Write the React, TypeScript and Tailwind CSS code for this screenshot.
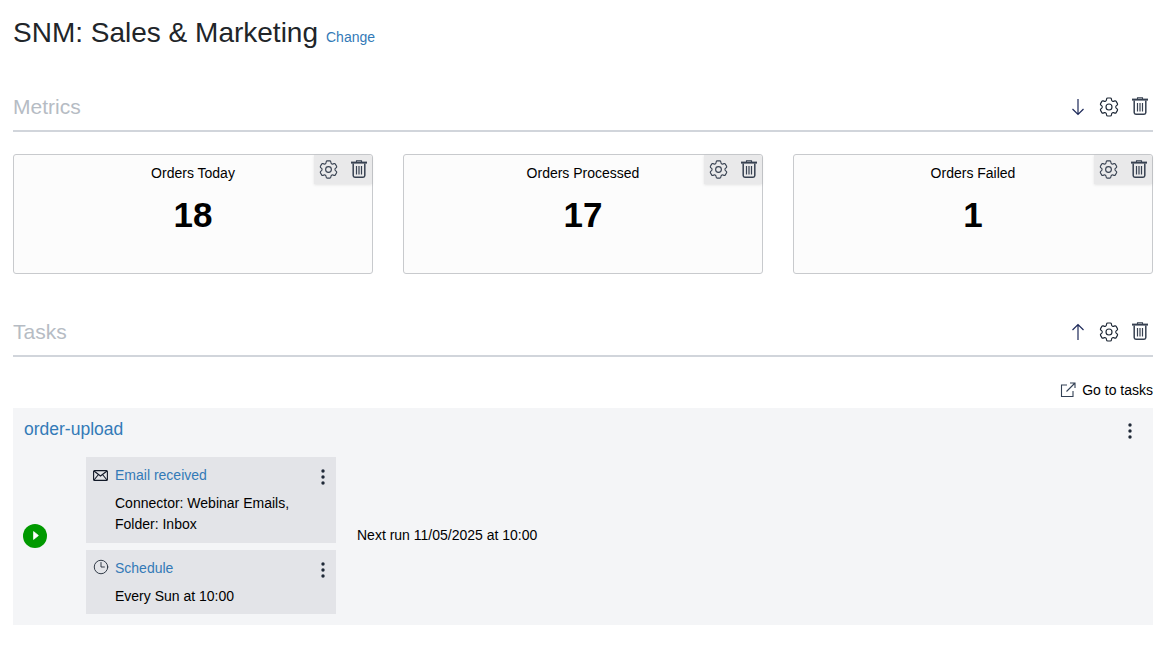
import React from "react";
import { HiOutlineCog6Tooth, HiOutlineClock } from "react-icons/hi2";

const link = "text-[#337ab7]";

function TrashIcon({ className }: { className?: string }) {
  return (
    <svg viewBox="0 0 16 18" fill="none" stroke="currentColor" className={className}>
      <path d="M5.5 2V.7h5V2" strokeWidth="1.1" />
      <path d="M0 2.6h16" strokeWidth="2" />
      <path d="M2.2 3.5v12c0 1 .7 1.7 1.7 1.7h8.2c1 0 1.7-.7 1.7-1.7v-12" strokeWidth="1.5" />
      <path d="M5.5 6v8.5M8 6v8.5M10.5 6v8.5" strokeWidth="1.2" />
    </svg>
  );
}

function ArrowIcon({ up }: { up?: boolean }) {
  return (
    <svg viewBox="0 0 14 18" fill="none" stroke="#1e2a5a" strokeWidth="1.2" className="w-[14px] h-[18px]">
      {up ? <path d="M7 17V1.5M1.5 7L7 1.5 12.5 7" /> : <path d="M7 1v15.5M1.5 11L7 16.5 12.5 11" />}
    </svg>
  );
}

function DotsIcon({ className }: { className?: string }) {
  return (
    <svg viewBox="0 0 4 16" fill="#1f2937" className={"w-[4px] h-[16px] shrink-0 " + (className || "")}>
      <circle cx="2" cy="2" r="1.7" />
      <circle cx="2" cy="8" r="1.7" />
      <circle cx="2" cy="14" r="1.7" />
    </svg>
  );
}

function SectionHeader({ title, up }: { title: string; up?: boolean }) {
  return (
    <div className="flex items-center justify-between h-[50px] pt-[1px] border-b-2 border-[#d1d5db]">
      <h2 className="text-[21px] text-[#b6bcc4]">{title}</h2>
      <div className="flex items-center pr-[5px] text-[#1f2937]">
        <ArrowIcon up={up} />
        <HiOutlineCog6Tooth strokeWidth={1.15} className="w-[24px] h-[24px] ml-[12px]" />
        <TrashIcon className="w-[16px] h-[18px] ml-[11px] -mt-[1px] text-[#374151]" />
      </div>
    </div>
  );
}

function MetricCard({ title, value }: { title: string; value: string }) {
  return (
    <div className="relative h-[120px] bg-[#fcfcfc] border border-[#c8cacd] rounded-[3px] flex flex-col items-center pt-[10px]">
      <div className="absolute top-0 right-0 w-[58px] h-[29px] pl-[3px] bg-[#e9e9ea] rounded-tr-[3px] shadow-[0_1px_3px_rgba(0,0,0,0.1)] flex items-center text-[#374151]">
        <HiOutlineCog6Tooth strokeWidth={1.15} className="w-[23px] h-[23px]" />
        <TrashIcon className="w-[16px] h-[18px] ml-[11px] -mt-[2px]" />
      </div>
      <div className="text-[14px] leading-[17px] text-black">{title}</div>
      <div className="text-[35px] leading-[40px] font-bold text-black mt-[13px]">{value}</div>
    </div>
  );
}

function EnvelopeIcon() {
  return (
    <svg viewBox="0 0 15 11" fill="none" stroke="#111827" strokeWidth="1.1" className="w-[15px] h-[11px]">
      <rect x="0.6" y="0.6" width="13.8" height="9.8" rx="1" />
      <path d="M1 1l6.5 5L14 1M1 10l4.5-5.5M14 10L9.5 4.5" />
    </svg>
  );
}

function TriggerCard({ icon, title, height, children }: { icon: React.ReactNode; title: string; height: string; children: React.ReactNode }) {
  return (
    <div className={"bg-[#e3e4e8] px-[7px] pt-[7px] flex " + height}>
      <div className="w-[22px] h-[22px] flex items-center justify-start shrink-0">{icon}</div>
      <div className="flex-1 text-[14px] leading-[21px]">
        <div className={link + " h-[22px] leading-[22px]"}>{title}</div>
        <div className="mt-[7px] text-black">{children}</div>
      </div>
      <DotsIcon className="mt-[5px] mr-[4px]" />
    </div>
  );
}

export default function App() {
  return (
    <div className="px-[13px] pr-[14px] font-['Liberation_Sans',Arial,sans-serif] text-[#212529]">
      <div className="flex items-baseline gap-[8px] pt-[15px] h-[82px]">
        <h1 className="text-[28px] leading-[36px]">SNM: Sales &amp; Marketing</h1>
        <a className={link + " text-[14px]"}>Change</a>
      </div>

      <SectionHeader title="Metrics" />
      <div className="grid grid-cols-3 gap-[30px] mt-[22px]">
        <MetricCard title="Orders Today" value="18" />
        <MetricCard title="Orders Processed" value="17" />
        <MetricCard title="Orders Failed" value="1" />
      </div>

      <div className="mt-[33px]">
        <SectionHeader title="Tasks" up />
      </div>
      <div className="flex items-center justify-end gap-[6px] h-[24px] mt-[21px] mb-[6px] text-[14px] text-black">
        <svg viewBox="0 0 16 16" fill="none" stroke="#334155" strokeWidth="1.1" className="w-[16px] h-[16px]">
          <path d="M7 3H1.5v11.5H13V9" />
          <path d="M6.5 9.5L15 1M10 1h5v5" />
        </svg>
        <span>Go to tasks</span>
      </div>

      <div className="bg-[#f4f5f7] h-[217px] px-[10px] pt-[10px]">
        <div className="flex items-center justify-between h-[22px]">
          <a className={link + " text-[17.5px] ml-[1px]"}>order-upload</a>
          <DotsIcon className="mr-[11px] mt-[4px]" />
        </div>
        <div className="flex items-center mt-[17px]">
          <div className="w-[24px] h-[24px] rounded-full bg-[#009900] flex items-center justify-center">
            <svg viewBox="0 0 6 9" fill="white" stroke="white" strokeWidth="0.8" strokeLinejoin="round" className="w-[6px] h-[9px] ml-[1px]">
              <path d="M.6.6v7.8L5.4 4.5z" />
            </svg>
          </div>
          <div className="w-[250px] ml-[39px] flex flex-col gap-[7px]">
            <TriggerCard icon={<EnvelopeIcon />} title="Email received" height="h-[86px]">
              Connector: Webinar Emails,
              <br />
              Folder: Inbox
            </TriggerCard>
            <TriggerCard icon={<HiOutlineClock strokeWidth={1.2} className="w-[18px] h-[18px] -ml-[1px] -mt-[2px] text-[#1f2937]" />} title="Schedule" height="h-[64px]">
              Every Sun at 10:00
            </TriggerCard>
          </div>
          <div className="ml-[21px] text-[14px] text-black">Next run 11/05/2025 at 10:00</div>
        </div>
      </div>
    </div>
  );
}
